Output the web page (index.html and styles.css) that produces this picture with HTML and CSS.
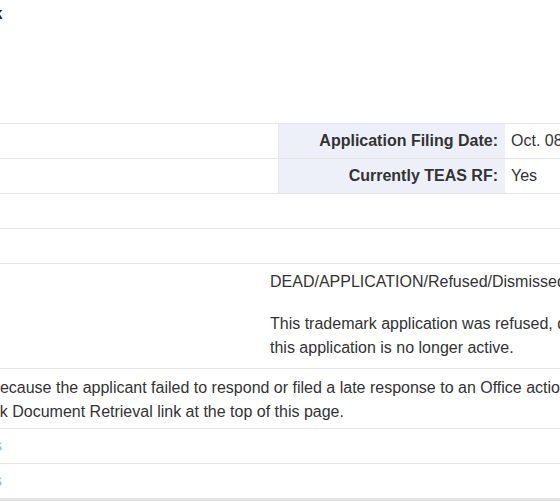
FILE: index.html
```html
<!DOCTYPE html>
<html lang="en">
<head>
<meta charset="utf-8">
<title>Trademark Status</title>
<link rel="stylesheet" href="styles.css">
</head>
<body>
<div class="page">
  <div class="top">
    <div class="title-frag"><span class="title-text">Mark</span></div>
  </div>
  <div class="table">
    <div class="row pair">
      <div class="cell left"></div>
      <div class="cell label">Application Filing Date:</div>
      <div class="cell value">Oct. 08, 2015</div>
    </div>
    <div class="row pair">
      <div class="cell left"></div>
      <div class="cell label">Currently TEAS RF:</div>
      <div class="cell value">Yes</div>
    </div>
    <div class="row empty"></div>
    <div class="row empty"></div>
    <div class="row status">
      <div class="cell status-left"></div>
      <div class="cell status-value">
        <div class="status-line">DEAD/APPLICATION/Refused/Dismissed or Invalidated</div>
        <div class="status-note">This trademark application was refused, dismissed, or invalidated by the Office and<br>this application is no longer active.</div>
      </div>
    </div>
    <div class="row note">
      <div class="note-line first">because the applicant failed to respond or filed a late response to an Office action.</div>
      <div class="note-line second">Trademark Document Retrieval link at the top of this page.</div>
    </div>
    <div class="row link-row"><a class="cut-link" href="#">Documents</a></div>
    <div class="row link-row"><a class="cut-link" href="#">Documents</a></div>
  </div>
</div>
</body>
</html>
```

FILE: styles.css
```css
html, body {
  margin: 0;
  padding: 0;
  background: #ffffff;
}

body {
  font-family: "Liberation Sans", Arial, sans-serif;
  font-size: 16px;
  line-height: 24px;
  color: #333333;
  overflow: hidden;
  width: 560px;
  height: 501px;
}

.page {
  width: 560px;
  overflow: hidden;
}

.top {
  height: 123px;
  border-bottom: 1px solid #e6e6e6;
}

.title-frag {
  padding-top: 4px;
  font-size: 16px;
  line-height: 20px;
  white-space: nowrap;
}

.title-text {
  display: inline-block;
  margin-left: -35px;
  font-weight: bold;
  color: #222;
}

.row {
  border-bottom: 1px solid #e6e6e6;
  white-space: nowrap;
}

.pair {
  display: grid;
  grid-template-columns: 279px 226px 1fr;
  height: 34px;
}

.cell {
  padding: 5px 0;
}

.left {
  border-right: 1px solid #e9e9e9;
}

.label {
  background: #eef0f9;
  text-align: right;
  font-weight: bold;
  padding-right: 7px;
}

.value {
  padding-left: 6px;
}

.empty {
  height: 34px;
}

.status {
  display: grid;
  grid-template-columns: 270px 1fr;
  height: 104px;
}

.status-left {
  padding: 0;
}

.status-value {
  padding-top: 6px;
}

.status-note {
  margin-top: 18px;
}

.note {
  height: 60px;
  box-sizing: border-box;
  padding: 7px 0 0;
}

.note-line.first {
  margin-left: -9px;
}

.note-line.second {
  margin-left: -69px;
}

.link-row {
  height: 34px;
  overflow: hidden;
  padding: 0;
}

.cut-link {
  display: inline-block;
  margin-left: -79px;
  padding-top: 5px;
  color: #8cc4d2;
  text-decoration: none;
}

.table .row:last-child {
  border-bottom: 3px solid #e3e3e3;
}
```
